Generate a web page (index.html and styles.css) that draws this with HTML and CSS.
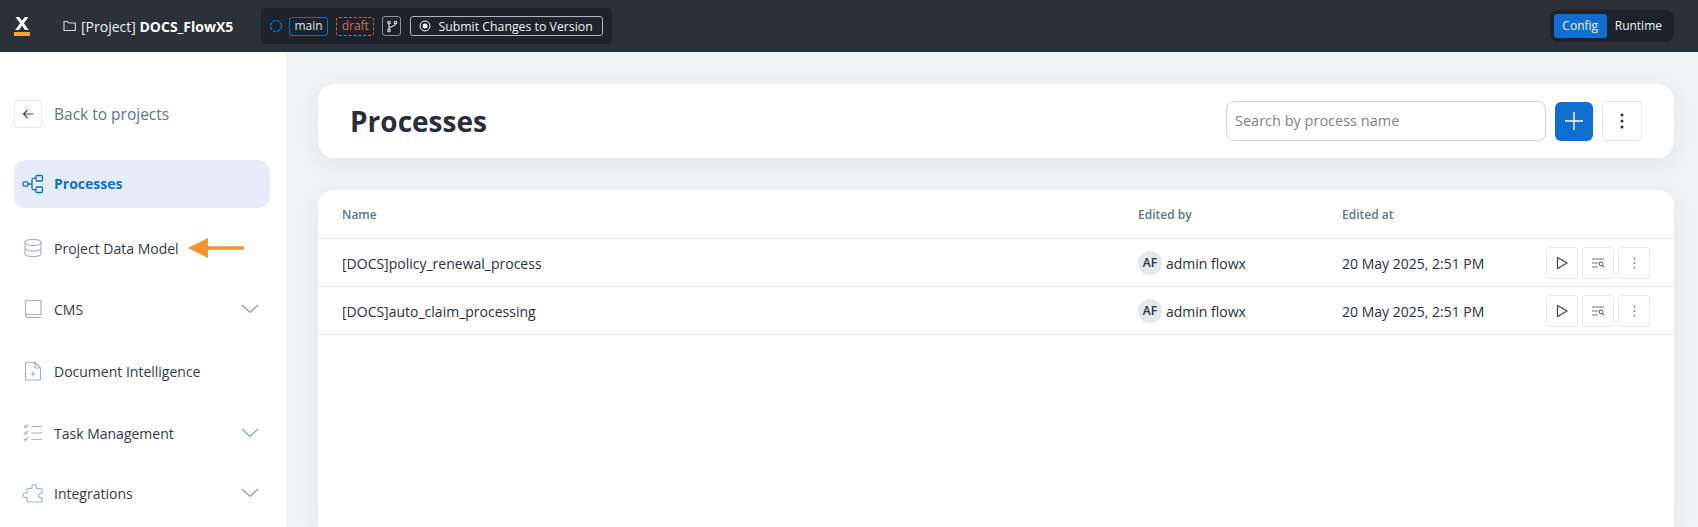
FILE: index.html
```html
<!DOCTYPE html>
<html lang="en">
<head>
<meta charset="utf-8">
<title>Processes</title>
<link rel="stylesheet" href="styles.css">
</head>
<body>
<header class="topbar">
  <div class="logo">
    <svg width="16" height="20" viewBox="0 0 16 20"><path d="M1.500 1h3.700L8 4.800 10.800 1h3.700L9.900 7.200 14.800 14h-3.800L8 9.800 5 14H1.200l4.900-6.800z" fill="#fff"/><rect x="0" y="16" width="16" height="4" fill="#f0a92e"/></svg>
  </div>
  <div class="project">
    <svg class="folder" width="13" height="12" viewBox="0 0 13 12" fill="none" stroke="#d5d9de" stroke-width="1.100"><path d="M1 10.500V1.500h3.500l1.200 1.500h6.600v7.500z"/></svg>
    <span>[Project] <b>DOCS_FlowX5</b></span>
  </div>
  <div class="branchbar">
    <svg class="spinner" width="14" height="14" viewBox="0 0 14 14" fill="none"><circle cx="7" cy="7" r="5.500" stroke="#0e6fd1" stroke-width="1.600" stroke-dasharray="3 1.300"/></svg>
    <span class="tag tag-main">main</span>
    <span class="tag tag-draft">draft</span>
    <span class="branch-btn">
      <svg width="12" height="13" viewBox="0 0 12 13" fill="none" stroke="#e4e7ea" stroke-width="1.100"><circle cx="3" cy="2.500" r="1.300"/><circle cx="9.500" cy="2.500" r="1.300"/><circle cx="3" cy="10.500" r="1.300"/><path d="M3 4v5M9.500 4c0 2.500-6.500 2.500-6.500 4.500"/></svg>
    </span>
    <span class="submit">
      <svg width="12" height="12" viewBox="0 0 12 12" fill="none"><circle cx="6" cy="6" r="5" stroke="#fff" stroke-width="1"/><circle cx="6" cy="6" r="2.500" fill="#fff"/></svg>
      Submit Changes to Version
    </span>
  </div>
  <div class="mode">
    <span class="mode-item mode-on">Config</span>
    <span class="mode-item">Runtime</span>
  </div>
</header>

<div class="app">
  <aside class="sidebar">
    <div class="back">
      <span class="back-btn">
        <svg width="14" height="14" viewBox="0 0 14 14" fill="none" stroke="#3a424c" stroke-width="1.100"><path d="M12 7H2.500M6.500 3 2.500 7l4 4"/></svg>
      </span>
      <span>Back to projects</span>
    </div>
    <nav class="nav">
      <a class="nav-item active">
        <svg class="nav-icon" width="22" height="20" viewBox="0 0 22 20" fill="none" stroke="#0e6fd1" stroke-width="1.300"><rect x="1" y="7.800" width="4.800" height="4.400" rx="1.200"/><rect x="14" y="1.500" width="6.500" height="5.500" rx="1"/><rect x="14" y="13" width="6.500" height="5.500" rx="1"/><path d="M5.800 10H10M14 4.200h-2a2 2 0 0 0-2 2v7.600a2 2 0 0 0 2 2h2"/></svg>
        <span>Processes</span>
      </a>
      <a class="nav-item">
        <svg class="nav-icon" width="20" height="20" viewBox="0 0 20 20" fill="none" stroke="#a9b4c3" stroke-width="1.200"><ellipse cx="10" cy="4.500" rx="8" ry="3.200"/><path d="M2 4.500v11c0 1.800 3.600 3.200 8 3.200s8-1.400 8-3.200v-11M2 10c0 1.800 3.600 3.200 8 3.200s8-1.400 8-3.200"/></svg>
        <span>Project Data Model</span>
      </a>
      <a class="nav-item">
        <svg class="nav-icon" width="20" height="20" viewBox="0 0 20 20" fill="none" stroke="#a9b4c3" stroke-width="1.200"><path d="M2.500 16V2.500a1 1 0 0 1 1-1h14.500v14H3.500a1 1 0 0 0-1 1 1.800 1.800 0 0 0 1.500 1.800h14"/></svg>
        <span>CMS</span>
        <svg class="chev" width="18" height="10" viewBox="0 0 18 10" fill="none" stroke="#8d9bb0" stroke-width="1.200"><path d="M1 1l8 7.500L17 1"/></svg>
      </a>
      <a class="nav-item">
        <svg class="nav-icon" width="20" height="20" viewBox="0 0 20 20" fill="none" stroke="#a9b4c3" stroke-width="1.200"><path d="M2.500 2.500a1 1 0 0 1 1-1h8.500l5.500 5.500v11a1 1 0 0 1-1 1h-13a1 1 0 0 1-1-1zM12 1.500V7h5.500M10 10.500v5M7.500 13h5"/></svg>
        <span>Document Intelligence</span>
      </a>
      <a class="nav-item">
        <svg class="nav-icon" width="20" height="20" viewBox="0 0 20 20" fill="none" stroke="#a9b4c3" stroke-width="1.200"><path d="M1 3l1.500 1.500L5 1.500M1 9.500 2.500 11 5 8M1 16l1.500 1.500L5 14.500M8.500 3.500h10.500M8.500 10h10.500M8.500 16.500h10.500"/></svg>
        <span>Task Management</span>
        <svg class="chev" width="18" height="10" viewBox="0 0 18 10" fill="none" stroke="#8d9bb0" stroke-width="1.200"><path d="M1 1l8 7.500L17 1"/></svg>
      </a>
      <a class="nav-item">
        <svg class="nav-icon" width="22" height="20" viewBox="0 0 22 20" fill="none" stroke="#a9b4c3" stroke-width="1.200"><path d="M6 19H19a1 1 0 0 0 1-1v-3.500h-1.500a2 2 0 0 1 0-4H20V6.500a1 1 0 0 0-1-1h-4.500V4a2.300 2.300 0 0 0-4.600 0v1.500H6a1 1 0 0 0-1 1V10H3.300a2.200 2.200 0 0 0 0 4.400H5V18a1 1 0 0 0 1 1z"/></svg>
        <span>Integrations</span>
        <svg class="chev" width="18" height="10" viewBox="0 0 18 10" fill="none" stroke="#8d9bb0" stroke-width="1.200"><path d="M1 1l8 7.500L17 1"/></svg>
      </a>
    </nav>
  </aside>

  <main class="main">
    <section class="card head-card">
      <h1>Processes</h1>
      <div class="tools">
        <div class="search">Search by process name</div>
        <span class="add">
          <svg width="18" height="18" viewBox="0 0 18 18" stroke="#fff" stroke-width="1.400"><path d="M9 0v18M0 9h18"/></svg>
        </span>
        <span class="more">
          <svg width="4" height="16" viewBox="0 0 4 16" fill="#2a3139"><circle cx="2" cy="2" r="1.500"/><circle cx="2" cy="8" r="1.500"/><circle cx="2" cy="14" r="1.500"/></svg>
        </span>
      </div>
    </section>

    <section class="card table-card">
      <div class="row row-head">
        <span>Name</span><span>Edited by</span><span>Edited at</span><span></span>
      </div>
      <div class="row">
        <span class="cell">[DOCS]policy_renewal_process</span>
        <span class="user"><i class="avatar">AF</i><span class="cell">admin flowx</span></span>
        <span class="cell">20 May 2025, 2:51 PM</span>
        <span class="actions">
          <span class="act"><svg width="14" height="14" viewBox="0 0 14 14" fill="none" stroke="#3a424c" stroke-width="1.100"><path d="M2.500 1.500v11L12 7z"/></svg></span>
          <span class="act"><svg width="14" height="12" viewBox="0 0 14 12" fill="none" stroke="#6f7883" stroke-width="1.200"><path d="M1 2h12M1 6h6M1 10h6"/><circle cx="10" cy="7" r="1.800"/><path d="M11.300 8.400 13 10"/></svg></span>
          <span class="act"><svg width="3" height="12" viewBox="0 0 3 12" fill="#7b8694"><circle cx="1.500" cy="1.500" r="1"/><circle cx="1.500" cy="6" r="1"/><circle cx="1.500" cy="10.500" r="1"/></svg></span>
        </span>
      </div>
      <div class="row">
        <span class="cell">[DOCS]auto_claim_processing</span>
        <span class="user"><i class="avatar">AF</i><span class="cell">admin flowx</span></span>
        <span class="cell">20 May 2025, 2:51 PM</span>
        <span class="actions">
          <span class="act"><svg width="14" height="14" viewBox="0 0 14 14" fill="none" stroke="#3a424c" stroke-width="1.100"><path d="M2.500 1.500v11L12 7z"/></svg></span>
          <span class="act"><svg width="14" height="12" viewBox="0 0 14 12" fill="none" stroke="#6f7883" stroke-width="1.200"><path d="M1 2h12M1 6h6M1 10h6"/><circle cx="10" cy="7" r="1.800"/><path d="M11.300 8.400 13 10"/></svg></span>
          <span class="act"><svg width="3" height="12" viewBox="0 0 3 12" fill="#7b8694"><circle cx="1.500" cy="1.500" r="1"/><circle cx="1.500" cy="6" r="1"/><circle cx="1.500" cy="10.500" r="1"/></svg></span>
        </span>
      </div>
    </section>
  </main>
</div>

<svg class="arrow" width="56" height="20" viewBox="0 0 56 20"><path d="M0 10 20 0v8.200h36v3.600H20V20z" fill="#f7922f"/></svg>
</body>
</html>
```

FILE: styles.css
```css
* { box-sizing: border-box; }
html, body { margin: 0; height: 527px; overflow: hidden; }
body { font-family: "Open Sans", "Noto Sans", sans-serif; color: #2a3139; background: #f2f3f4; position: relative; }

.topbar { height: 52px; background: #2a3139; display: flex; align-items: center; padding: 0 24px 0 14px; color: #fff; }
.logo { width: 16px; height: 20px; margin-right: 33px; }
.logo svg { display: block; }
.project { display: flex; align-items: center; gap: 5px; font-size: 14px; width: 198px; color: #eef0f2; white-space: nowrap; }
.project b { font-weight: 700; color: #fff; }
.folder { flex: none; }
.branchbar { height: 36px; background: #1d232b; border-radius: 4px; display: flex; align-items: center; padding: 0 9px 0 8px; font-size: 12px; }
.spinner { margin-right: 6px; }
.tag { height: 19px; line-height: 16px; border-radius: 3px; padding: 0 4.500px; }
.tag-main { border: 1px solid #0e6fd1; color: #dfe3e8; margin-right: 8px; }
.tag-draft { border: 1px dashed #e0632b; color: #d8703f; margin-right: 8px; }
.branch-btn { width: 19px; height: 20px; border: 1px solid #8b929b; border-radius: 3px; display: flex; align-items: center; justify-content: center; margin-right: 9px; }
.submit { height: 20px; width: 193px; border: 1px solid #b0b5bb; border-radius: 3px; display: flex; align-items: center; gap: 7px; padding-left: 8px; font-size: 12.300px; font-weight: 500; color: #f1f3f5; white-space: nowrap; }
.mode { margin-left: auto; height: 32px; background: #1d232b; border-radius: 8px; display: flex; align-items: center; padding: 0 4px; font-size: 12px; }
.mode-item { height: 24px; line-height: 24px; padding: 0 8px; color: #f1f3f5; }
.mode-on { background: #0e6fd1; border-radius: 3px; width: 53px; text-align: center; padding: 0; margin-right: 0; }

.app { display: flex; height: 475px; }
.sidebar { width: 286px; flex: none; background: #fff; padding: 48px 16px 0 14px; }
.back { display: flex; align-items: center; gap: 12px; height: 28px; font-size: 15.500px; color: #64748b; }
.back-btn { width: 28px; height: 28px; border: 1px solid #e3e8ee; border-radius: 4px; display: flex; align-items: center; justify-content: center; }
.nav { margin-top: 32px; display: flex; flex-direction: column; gap: 14px; }
.nav-item { height: 48px; display: flex; align-items: center; font-size: 14px; color: #343b45; padding: 0 11px 0 8px; border-radius: 12px; }
.nav-item:first-child { margin-bottom: 2px; }
.nav-item:nth-child(2) { margin-bottom: -1px; }
.nav-item:last-child { margin-top: -2px; }
.nav-item > span { margin-left: 10px; }
.nav-icon { flex: none; width: 22px; }
.chev { margin-left: auto; }
.active { background: #e6edf8; color: #0e6fd1; font-weight: 700; }
.active > span { transform: translateY(-1px); }

.main { flex: 1; padding: 32px 24px 0 32px; display: flex; flex-direction: column; gap: 32px; min-width: 0; }
.card { background: #fff; border-radius: 16px; box-shadow: 0 4px 20px rgba(40, 50, 65, .08); }
.head-card { height: 74px; flex: none; display: flex; align-items: center; justify-content: space-between; padding: 0 32px; }
h1 { margin: 0; font-size: 28px; font-weight: 700; color: #2b2e36; }
.tools { display: flex; align-items: center; gap: 9px; }
.search { width: 320px; height: 40px; border: 1px solid #cfd3dc; border-radius: 8px; line-height: 38px; padding-left: 8px; font-size: 14.500px; color: #7f8287; }
.add { width: 38px; height: 39px; background: #0e6fd1; border-radius: 6px; display: flex; align-items: center; justify-content: center; }
.more { width: 40px; height: 40px; border: 1px solid #e3e6ec; border-radius: 3px; display: flex; align-items: center; justify-content: center; }

.table-card { flex: 1; border-radius: 16px 16px 0 0; font-size: 14px; color: #2a3139; }
.row { display: grid; grid-template-columns: 796px 204px 204px 1fr; align-items: center; height: 48px; padding-left: 24px; border-bottom: 1px solid #e3e9f0; }
.row-head { height: 49px; font-size: 12px; font-weight: 600; color: #64748b; }
.cell { padding-top: 2px; }
.user { display: flex; align-items: center; }
.avatar { width: 24px; height: 24px; border-radius: 50%; background: #e4e8ec; font-style: normal; font-size: 12px; font-weight: 600; color: #2a3139; display: flex; align-items: center; justify-content: center; margin-right: 4px; }
.actions { display: flex; gap: 4px; justify-content: flex-end; padding-right: 24px; }
.act { width: 32px; height: 32px; border: 1px solid #e5e8ec; border-radius: 4px; display: flex; align-items: center; justify-content: center; }

.arrow { position: absolute; left: 188px; top: 238px; }
```
